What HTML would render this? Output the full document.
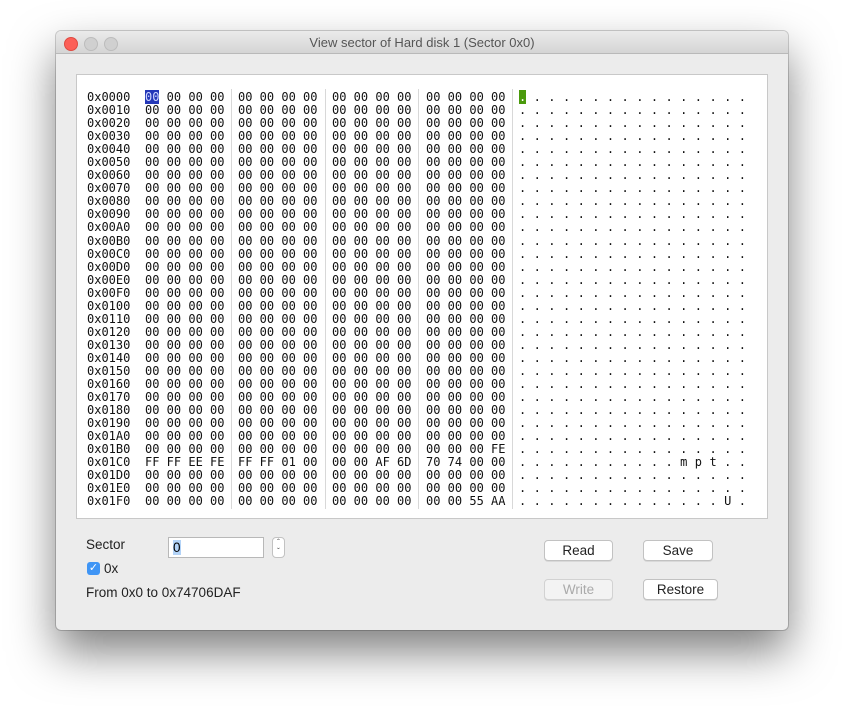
<!DOCTYPE html>
<html><head><meta charset="utf-8"><style>
body{margin:0;width:844px;height:710px;background:#fff;position:relative;overflow:hidden;font-family:"Liberation Sans",sans-serif;}
.win{position:absolute;left:56px;top:31px;width:732px;height:599px;background:#ececec;border-radius:5px;box-shadow:0 22px 45px rgba(0,0,0,0.5),0 0 0 1px rgba(0,0,0,0.18);overflow:hidden}
.title{position:absolute;left:0;top:0;width:732px;height:22px;background:linear-gradient(#ebebeb,#d5d5d5);border-bottom:1px solid #b9b9b9;text-align:center;font-size:13px;line-height:23px;color:#555}
.dot{position:absolute;top:6px;width:12px;height:12px;border-radius:50%}
.panel{position:absolute;left:20px;top:43px;width:690px;height:443px;background:#fff;border:1px solid #c8c8c8}
pre{position:absolute;margin:0;font-family:"DejaVu Sans Mono",monospace;font-size:12px;line-height:13.05px;color:#111;top:16px}
.sep{position:absolute;top:14px;width:1px;height:420px;background:#d8d8d8}
.lbl{position:absolute;font-size:13.5px;color:#222}
.btn{position:absolute;height:19px;background:#fff;border:1px solid #c2c2c2;border-radius:4px;font-size:13.5px;text-align:center;line-height:19px;color:#222;box-shadow:0 1px 0 rgba(0,0,0,0.08)}
</style></head><body>
<div class="win">
<div class="title">View sector of Hard disk 1 (Sector 0x0)
<div class="dot" style="left:8px;background:#fc5f57;border:0.5px solid #de4a41"></div>
<div class="dot" style="left:28px;background:#d0d0d0;border:0.5px solid #bcbcbc"></div>
<div class="dot" style="left:48px;background:#d0d0d0;border:0.5px solid #bcbcbc"></div>
</div>
<div class="panel">
<pre style="left:10px">0x0000
0x0010
0x0020
0x0030
0x0040
0x0050
0x0060
0x0070
0x0080
0x0090
0x00A0
0x00B0
0x00C0
0x00D0
0x00E0
0x00F0
0x0100
0x0110
0x0120
0x0130
0x0140
0x0150
0x0160
0x0170
0x0180
0x0190
0x01A0
0x01B0
0x01C0
0x01D0
0x01E0
0x01F0</pre>
<pre style="left:68px"><span style="background:#2438b8;color:#cfd6ff">00</span> 00 00 00
00 00 00 00
00 00 00 00
00 00 00 00
00 00 00 00
00 00 00 00
00 00 00 00
00 00 00 00
00 00 00 00
00 00 00 00
00 00 00 00
00 00 00 00
00 00 00 00
00 00 00 00
00 00 00 00
00 00 00 00
00 00 00 00
00 00 00 00
00 00 00 00
00 00 00 00
00 00 00 00
00 00 00 00
00 00 00 00
00 00 00 00
00 00 00 00
00 00 00 00
00 00 00 00
00 00 00 00
FF FF EE FE
00 00 00 00
00 00 00 00
00 00 00 00</pre>
<div class="sep" style="left:154px"></div>
<pre style="left:161px">00 00 00 00
00 00 00 00
00 00 00 00
00 00 00 00
00 00 00 00
00 00 00 00
00 00 00 00
00 00 00 00
00 00 00 00
00 00 00 00
00 00 00 00
00 00 00 00
00 00 00 00
00 00 00 00
00 00 00 00
00 00 00 00
00 00 00 00
00 00 00 00
00 00 00 00
00 00 00 00
00 00 00 00
00 00 00 00
00 00 00 00
00 00 00 00
00 00 00 00
00 00 00 00
00 00 00 00
00 00 00 00
FF FF 01 00
00 00 00 00
00 00 00 00
00 00 00 00</pre>
<div class="sep" style="left:248px"></div>
<pre style="left:255px">00 00 00 00
00 00 00 00
00 00 00 00
00 00 00 00
00 00 00 00
00 00 00 00
00 00 00 00
00 00 00 00
00 00 00 00
00 00 00 00
00 00 00 00
00 00 00 00
00 00 00 00
00 00 00 00
00 00 00 00
00 00 00 00
00 00 00 00
00 00 00 00
00 00 00 00
00 00 00 00
00 00 00 00
00 00 00 00
00 00 00 00
00 00 00 00
00 00 00 00
00 00 00 00
00 00 00 00
00 00 00 00
00 00 AF 6D
00 00 00 00
00 00 00 00
00 00 00 00</pre>
<div class="sep" style="left:341px"></div>
<pre style="left:349px">00 00 00 00
00 00 00 00
00 00 00 00
00 00 00 00
00 00 00 00
00 00 00 00
00 00 00 00
00 00 00 00
00 00 00 00
00 00 00 00
00 00 00 00
00 00 00 00
00 00 00 00
00 00 00 00
00 00 00 00
00 00 00 00
00 00 00 00
00 00 00 00
00 00 00 00
00 00 00 00
00 00 00 00
00 00 00 00
00 00 00 00
00 00 00 00
00 00 00 00
00 00 00 00
00 00 00 00
00 00 00 FE
70 74 00 00
00 00 00 00
00 00 00 00
00 00 55 AA</pre>
<div class="sep" style="left:435px"></div>
<pre style="left:442px;letter-spacing:0.1px"><span style="background:#4a9a0c;color:#fff">.</span> . . . . . . . . . . . . . . .
. . . . . . . . . . . . . . . .
. . . . . . . . . . . . . . . .
. . . . . . . . . . . . . . . .
. . . . . . . . . . . . . . . .
. . . . . . . . . . . . . . . .
. . . . . . . . . . . . . . . .
. . . . . . . . . . . . . . . .
. . . . . . . . . . . . . . . .
. . . . . . . . . . . . . . . .
. . . . . . . . . . . . . . . .
. . . . . . . . . . . . . . . .
. . . . . . . . . . . . . . . .
. . . . . . . . . . . . . . . .
. . . . . . . . . . . . . . . .
. . . . . . . . . . . . . . . .
. . . . . . . . . . . . . . . .
. . . . . . . . . . . . . . . .
. . . . . . . . . . . . . . . .
. . . . . . . . . . . . . . . .
. . . . . . . . . . . . . . . .
. . . . . . . . . . . . . . . .
. . . . . . . . . . . . . . . .
. . . . . . . . . . . . . . . .
. . . . . . . . . . . . . . . .
. . . . . . . . . . . . . . . .
. . . . . . . . . . . . . . . .
. . . . . . . . . . . . . . . .
. . . . . . . . . . . m p t . .
. . . . . . . . . . . . . . . .
. . . . . . . . . . . . . . . .
. . . . . . . . . . . . . . U .</pre>
</div>
<div class="lbl" style="left:30px;top:506px">Sector</div>
<div style="position:absolute;left:112px;top:506px;width:90px;height:19px;background:#fff;border:1px solid #b8b8b8;font-size:13.5px;line-height:19px;padding-left:4px;box-sizing:content-box"><span style="background:#b3d3f7">0</span></div>
<div style="position:absolute;left:216px;top:506px;width:11px;height:19px;background:#fff;border:1px solid #c2c2c2;border-radius:4px;font-size:8px;line-height:9px;text-align:center;color:#444">&#710;<br>&#711;</div>
<div style="position:absolute;left:31px;top:531px;width:13px;height:13px;background:#3f95f5;border-radius:3px;color:#fff;font-size:11px;line-height:13px;text-align:center">&#10003;</div>
<div class="lbl" style="left:48px;top:530px">0x</div>
<div class="lbl" style="left:30px;top:554px">From 0x0 to 0x74706DAF</div>
<div class="btn" style="left:488px;top:509px;width:67px">Read</div>
<div class="btn" style="left:587px;top:509px;width:68px">Save</div>
<div class="btn" style="left:488px;top:548px;width:67px;background:#f3f3f3;color:#aaa;border-color:#d2d2d2">Write</div>
<div class="btn" style="left:587px;top:548px;width:73px">Restore</div>
</div>
</body></html>
